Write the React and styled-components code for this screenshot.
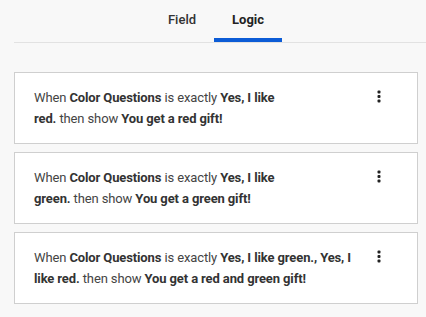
import styled, { createGlobalStyle } from "styled-components";

const GlobalStyle = createGlobalStyle`
  html, body {
    margin: 0;
    padding: 0;
    background: #f8f8f8;
    font-family: Roboto, "Liberation Sans", sans-serif;
    color: #444;
  }
`;

const rules = [
  {
    question: "Color Questions",
    value: ["Yes, I like", "red."],
    result: "You get a red gift!",
  },
  {
    question: "Color Questions",
    value: ["Yes, I like", "green."],
    result: "You get a green gift!",
  },
  {
    question: "Color Questions",
    value: ["Yes, I like green., Yes, I", "like red."],
    result: "You get a red and green gift!",
  },
];

function Kebab() {
  return (
    <svg width="4" height="13" viewBox="0 0 4 13">
      <rect x="0.5" y="0.5" width="3" height="3" rx="1" fill="#222" />
      <rect x="0.5" y="5" width="3" height="3" rx="1" fill="#222" />
      <rect x="0.5" y="9.5" width="3" height="3" rx="1" fill="#222" />
    </svg>
  );
}

function App() {
  return (
    <>
      <GlobalStyle />
      <StPage>
        <StTabs>
          <StTab>Field</StTab>
          <StTab active>Logic</StTab>
        </StTabs>
        <StList>
          {rules.map((rule, i) => (
            <StCard key={i}>
              <StRuleText>
                When <b>{rule.question}</b> is exactly <b>{rule.value[0]}</b>
                <br />
                <b>{rule.value[1]}</b> then show <b>{rule.result}</b>
              </StRuleText>
              <StMenuBtn>
                <Kebab />
              </StMenuBtn>
            </StCard>
          ))}
        </StList>
      </StPage>
    </>
  );
}

export default App;

const StPage = styled.div`
  padding-left: 14px;
  width: 404px;
`;

const StTabs = styled.div`
  display: flex;
  justify-content: center;
  height: 42px;
  border-bottom: 1px solid #e2e2e2;
  margin-right: -8px;
  padding-right: 8px;
`;

const StTab = styled.div`
  display: flex;
  align-items: center;
  justify-content: center;
  box-sizing: border-box;
  height: 42px;
  padding: 3px 18px 2px;
  font-size: 13px;
  font-weight: ${(props) => (props.active ? 700 : 500)};
  color: ${(props) => (props.active ? "#222" : "#333")};
  border-bottom: 4px solid
    ${(props) => (props.active ? "#0c5cd6" : "transparent")};
`;

const StList = styled.div`
  display: flex;
  flex-direction: column;
  gap: 8px;
  margin-top: 29px;
`;

const StCard = styled.div`
  display: flex;
  justify-content: space-between;
  align-items: flex-start;
  background: #fff;
  border: 1px solid #cfcfcf;
  padding: 14px 36px 14px 19px;
`;

const StRuleText = styled.div`
  font-size: 13px;
  line-height: 21px;
  letter-spacing: -0.12px;
  color: #444;

  & b {
    font-weight: 700;
    color: #333;
  }
`;

const StMenuBtn = styled.div`
  display: flex;
  padding-top: 3px;
`;
